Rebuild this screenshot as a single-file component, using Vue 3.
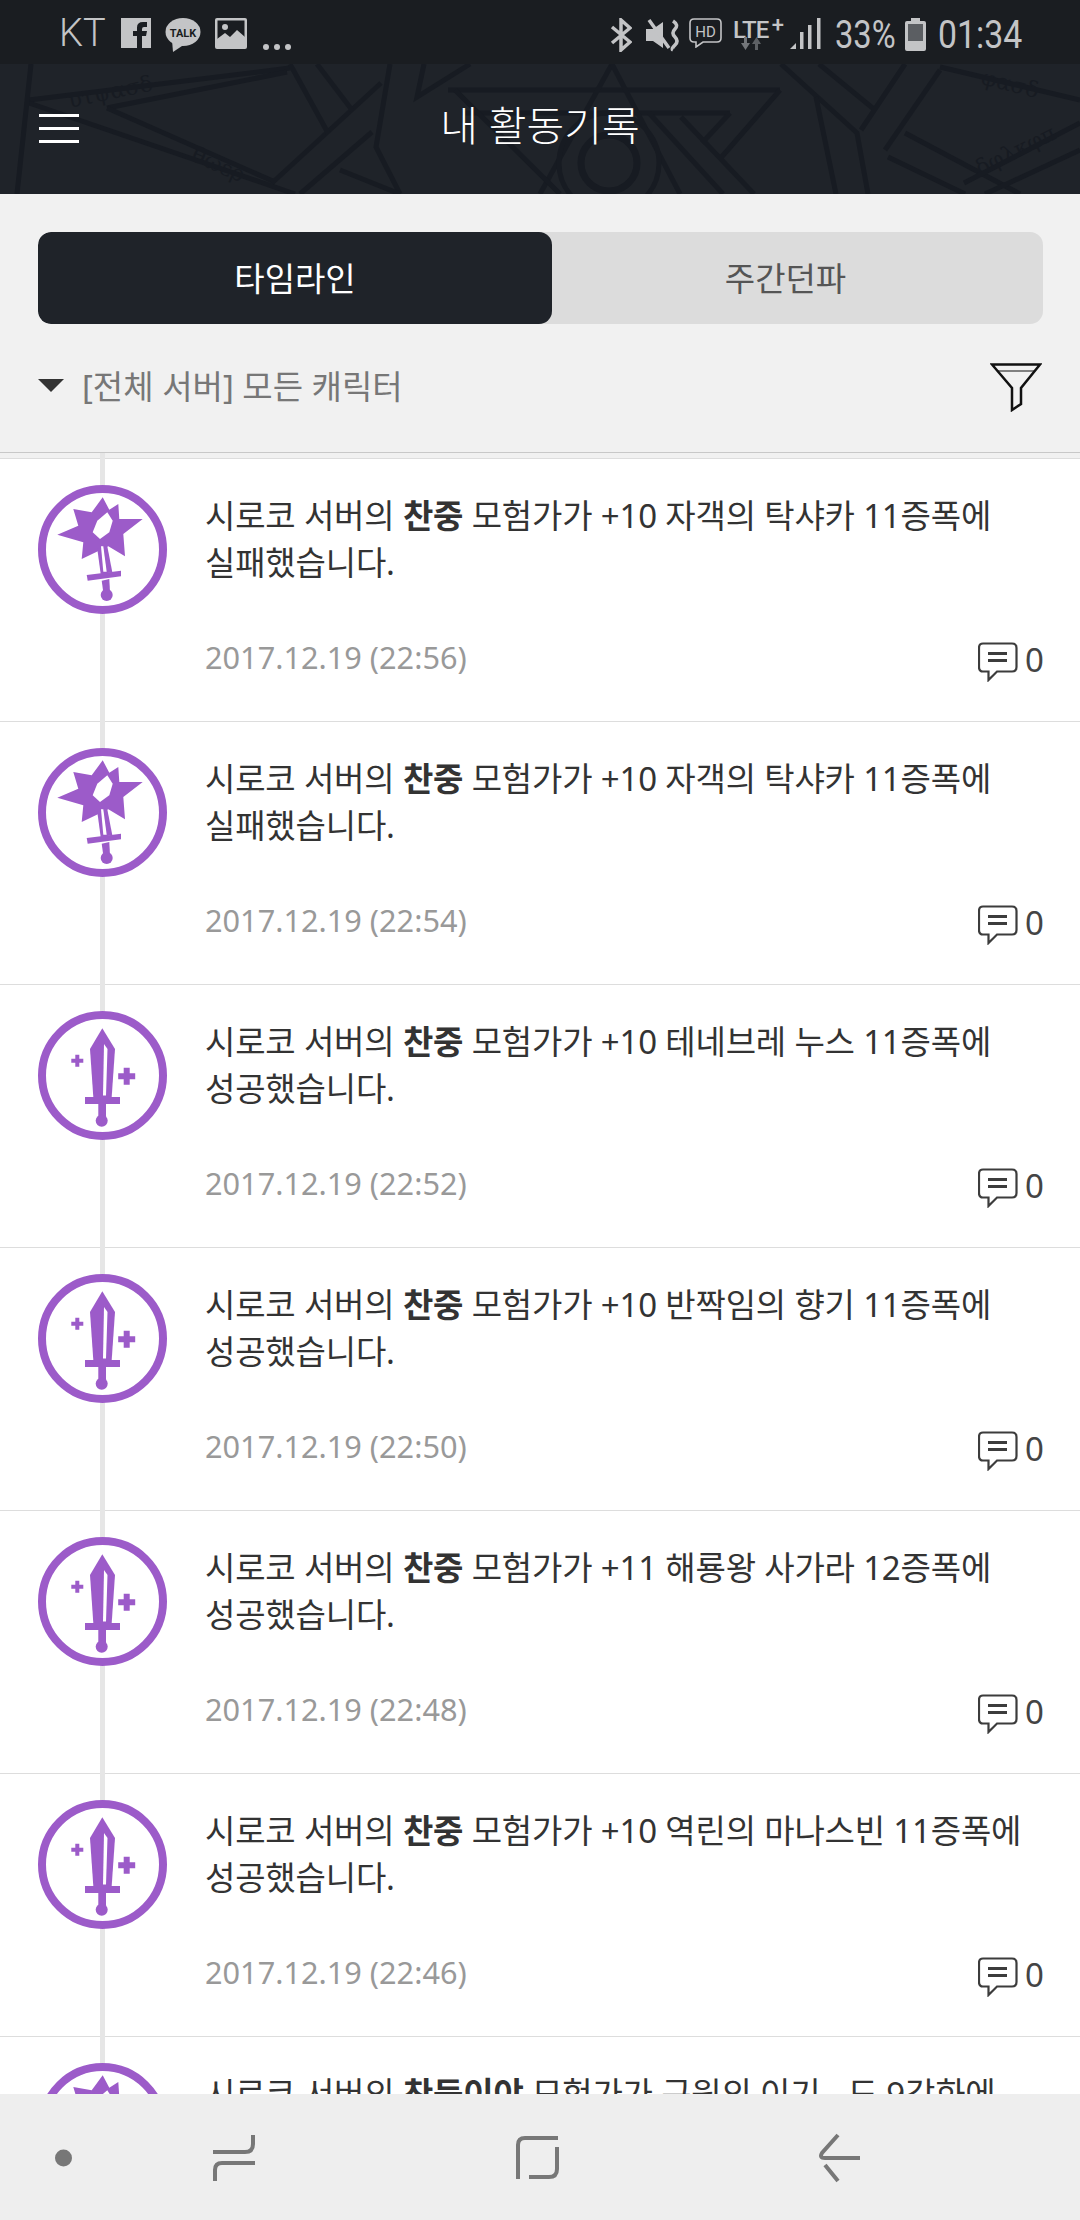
<script setup>
const rows = [
  { name: '찬중', rest: ' 모험가가 +10 자객의 탁샤카 11증폭에', result: '실패했습니다.', date: '2017.12.19 (22:56)', kind: 'star' },
  { name: '찬중', rest: ' 모험가가 +10 자객의 탁샤카 11증폭에', result: '실패했습니다.', date: '2017.12.19 (22:54)', kind: 'star' },
  { name: '찬중', rest: ' 모험가가 +10 테네브레 누스 11증폭에', result: '성공했습니다.', date: '2017.12.19 (22:52)', kind: 'sword' },
  { name: '찬중', rest: ' 모험가가 +10 반짝임의 향기 11증폭에', result: '성공했습니다.', date: '2017.12.19 (22:50)', kind: 'sword' },
  { name: '찬중', rest: ' 모험가가 +11 해룡왕 사가라 12증폭에', result: '성공했습니다.', date: '2017.12.19 (22:48)', kind: 'sword' },
  { name: '찬중', rest: ' 모험가가 +10 역린의 마나스빈 11증폭에', result: '성공했습니다.', date: '2017.12.19 (22:46)', kind: 'sword' },
  { name: '찬둥이야', rest: ' 모험가가 구원의 이기 - 도 9강화에', result: '', date: '', kind: 'star' }
]
const patternLines = [
  'M29 100L290 68', 'M107 108L287 72', 'M29 103L295 194', 'M107 108L275 182',
  'M381 83L272 183', 'M372 132L300 194', 'M290 64L328 133', 'M317 64L352 110',
  'M390 64L376 147L400 194', 'M424 64L417 97L470 64', 'M31 64L17 194',
  'M448 90H780', 'M462 113H730', 'M780 90L719 160', 'M730 113L702 143',
  'M681 117L754 194', 'M649 113L723 194', 'M612 64L540 194', 'M612 64L680 194',
  'M455 90L560 194', 'M781 64L857 133L868 194', 'M819 64L875 110', 'M905 64L861 130',
  'M940 70L885 150', 'M940 67L1080 100', 'M905 133L1020 194', 'M888 157L965 194',
  'M964 183L1080 123', 'M985 194L1080 150', 'M816 97L836 194', 'M340 170L400 194'
]
</script>

<template>
  <div class="screen">
    <div class="status">
      <div class="status-left">
        <span class="carrier">KT</span>
        <svg class="ic" width="30" height="30" viewBox="0 0 30 30"><path fill="#c3c4c6" d="M0 0h30v30H0z"/><path fill="#1a1d21" d="M16 30V18h-4v-5h4V9.500Q16 4 22 4h4v5h-3q-2 0-2 2v2h5l-1 5h-4v12z"/></svg>
        <svg class="ic talk" width="36" height="34" viewBox="0 0 36 34"><ellipse cx="18" cy="14" rx="17.500" ry="14" fill="#c3c4c6"/><path fill="#c3c4c6" d="M7 22L8 34L20 26z"/><text x="18" y="18.500" text-anchor="middle" class="talk-t">TALK</text></svg>
        <svg class="ic" width="32" height="31" viewBox="0 0 32 31"><rect width="32" height="31" rx="2" fill="#c3c4c6"/><rect x="2.500" y="2.500" width="27" height="21" fill="#1a1d21"/><circle cx="10" cy="9" r="3" fill="#c3c4c6"/><path fill="#c3c4c6" d="M2 25V21L10 15L15 19L22 12L30 19V25z"/></svg>
        <span class="dots"><i></i><i></i><i></i></span>
      </div>
      <div class="status-right">
        <svg width="22" height="34" viewBox="0 0 22 34" fill="none" stroke="#c3c4c6" stroke-width="3.500"><path d="M2 9L20 24L11 32V2L20 10L2 25"/></svg>
        <svg class="g14" width="34" height="34" viewBox="0 0 34 34"><path fill="#c3c4c6" d="M0 11h7L17 4v26L7 23H0z"/><path stroke="#c3c4c6" stroke-width="3.500" fill="none" d="M3 2L23 30M27 3Q33 7 29 11T29 19T29 27T27 32"/></svg>
        <svg class="g9" width="33" height="30" viewBox="0 0 33 30" fill="none" stroke="#c3c4c6" stroke-width="1.600"><path d="M5 1H28Q32 1 32 5V20Q32 24 28 24H14L7 29V24H5Q1 24 1 20V5Q1 1 5 1Z"/><text x="16.500" y="19" text-anchor="middle" class="hd-t">HD</text></svg>
        <span class="lte g11"><span class="lte-t">LTE</span><sup class="lte-p">+</sup><svg class="lte-arrows" width="20" height="13" viewBox="0 0 20 13"><path fill="#73767a" d="M3 0h3v6h3L4.500 13L0 6h3z"/><path fill="#5d6064" d="M14 13h3V7h3L15.500 0L11 7h3z"/></svg></span>
        <svg class="g6" width="32" height="34" viewBox="0 0 32 34" fill="#c3c4c6"><path d="M0 31L6 25V31z"/><path d="M10 14h3.500V31H10zM18 7h3.500V31H18z"/><path d="M27 0h3.500V31H27z"/></svg>
        <span class="pct g13"><span class="cond">33%</span></span>
        <svg class="batt g10" width="21" height="33" viewBox="0 0 21 33"><path fill="#c3c4c6" d="M6 0h9v3h4q2 0 2 2v26q0 2-2 2H2q-2 0-2-2V5q0-2 2-2h4z"/><rect x="3" y="6" width="15" height="17" fill="#5b5e62"/></svg>
        <span class="clock g12"><span class="cond wide">01:34</span></span>
      </div>
    </div>

    <header class="bar">
      <svg class="pattern" viewBox="0 64 1080 130" width="1080" height="130" fill="none" stroke="#171b22" stroke-width="5">
        <path v-for="d in patternLines" :key="d" :d="d"/>
        <circle cx="609" cy="163" r="50"/><circle cx="609" cy="163" r="28" stroke-width="7"/>
        <text x="70" y="108" transform="rotate(-12 70 108)" class="greek">υτψασδ</text>
        <text x="190" y="160" transform="rotate(24 190 160)" class="greek">θωερ</text>
        <text x="980" y="176" transform="rotate(-26 980 176)" class="greek">δφλκφπ</text>
        <text x="980" y="84" transform="rotate(14 980 84)" class="greek">φασδ</text>
      </svg>
      <button class="menu" aria-label="메뉴"><i></i><i></i><i></i></button>
      <h1 class="title">내 활동기록</h1>
    </header>

    <section class="controls">
      <div class="tabs">
        <div class="tab active">타임라인</div>
        <div class="tab">주간던파</div>
      </div>
      <div class="filter">
        <div class="server"><i class="caret"></i><span>[전체 서버] 모든 캐릭터</span></div>
        <svg class="funnel" width="52" height="49" viewBox="0 0 52 49" fill="none" stroke="#111" stroke-width="2.500"><path d="M2 1.500H50L31 25V41L22 47V25Z"/><path stroke-width="1.200" d="M8 8H44"/></svg>
      </div>
    </section>

    <main class="list">
      <div class="rail"></div>
      <article v-for="(r, i) in rows" :key="i" class="row">
        <svg class="badge" width="129" height="129" viewBox="0 0 129 129">
          <circle cx="64.500" cy="64.500" r="60.500" fill="#fff" stroke="#9c5bc9" stroke-width="8"/>
          <g v-if="r.kind === 'star'" fill="#9c5bc9">
            <polygon points="64.700,12.300 71.300,24.700 80.300,19 81.300,34 104.700,34 85.300,49 87,71.300 70.300,61.300 43.700,74 45.300,57.300 19.300,49.700 40.300,40.700 35.300,24 53.700,27.300"/>
            <polygon fill="#fff" points="69.300,27.300 74.700,35.700 71.300,47.300 62,54 54.700,47.300 59.300,35.700"/>
            <polygon points="59.300,64 69.300,61.300 74.300,87.300 62.700,89"/>
            <polygon fill="#fff" points="63,61.300 65.300,61.300 68.700,86.700 65.300,86.700"/>
            <polygon points="48.700,90 83,85.700 83,91.300 49.700,95.700"/>
            <polygon points="63.700,95.700 71.300,94 72,107.300 65.300,107.300"/>
            <circle cx="68.700" cy="110" r="6"/>
          </g>
          <g v-else fill="#9c5bc9">
            <polygon points="64.300,17.300 77,38 73.700,86 55.300,86 52,38"/>
            <polygon fill="#fff" points="66,33 69.500,38 68,84.500 65,84.500"/>
            <rect x="47" y="86" width="35" height="7"/>
            <rect x="60.300" y="93" width="7.700" height="16"/>
            <circle cx="63.700" cy="109.700" r="6"/>
            <path d="M37.300 43.700h4v4h4v4h-4v4h-4v-4h-4v-4h4z"/>
            <path d="M85.700 56.800h6v5.500h5.500v6h-5.500v5.500h-6v-5.500h-5.500v-6h5.500z"/>
          </g>
        </svg>
        <div class="body">
          <p class="msg">시로코 서버의 <b>{{ r.name }}</b>{{ r.rest }}<br/>{{ r.result }}</p>
          <div class="meta">
            <span class="date">{{ r.date }}</span>
            <span class="count">
              <svg class="bubble" width="40" height="40" viewBox="0 0 40 40" fill="none" stroke="#3c3c3c" stroke-width="2.200"><path d="M5 1.500H34Q38.500 1.500 38.500 6V25Q38.500 29.500 34 29.500H19L10.500 38V29.500H5Q1 29.500 1 25V6Q1 1.500 5 1.500Z"/><path stroke-width="3" d="M10 11.500H29M10 18.500H29"/></svg>
              <span>0</span>
            </span>
          </div>
        </div>
      </article>
    </main>

    <nav class="nav">
      <svg class="nav-icons" width="1080" height="126" viewBox="0 0 1080 126" fill="none" stroke="#777" stroke-width="4">
        <circle cx="63.500" cy="64" r="8.500" fill="#777" stroke="none"/>
        <path d="M253 41V50Q253 58 245 58H213M255 69H222Q215 69 215 76V87"/>
        <path d="M558 44H525Q518 44 518 51V85M557 53V75Q557 83 549 83H529"/>
        <path d="M838 41L822 59Q819 64 825 64H860M825 71L838 87"/>
      </svg>
    </nav>
  </div>
</template>

<style scoped>
.screen { width: 1080px; height: 2220px; display: flex; flex-direction: column; overflow: hidden; background: #fff; font-family: "Noto Sans", "Noto Sans CJK KR", sans-serif; }
.status { height: 64px; flex: none; background: #1a1d21; color: #c3c4c6; display: flex; justify-content: space-between; padding: 18px 60px 0 59px; box-sizing: border-box; }
.status-left, .status-right { display: flex; align-items: flex-start; }
.carrier { font: 300 38px/30px Roboto, sans-serif; margin-right: 15px; }
.ic { margin-right: 14px; flex: none; }
.talk-t { font: bold 11px Roboto, sans-serif; fill: #1a1d21; }
.dots { display: flex; gap: 5px; margin-top: 26px; margin-left: 2px; }
.dots i { width: 6px; height: 6px; border-radius: 50%; background: #c3c4c6; }
.g14 { margin-left: 14px; }
.g9 { margin-left: 9px; }
.g11 { margin-left: 11px; }
.g6 { margin-left: 6px; }
.g13 { margin-left: 13px; }
.g10 { margin-left: 10px; }
.g12 { margin-left: 12px; }
.hd-t { font: 15px Roboto, sans-serif; fill: #c3c4c6; stroke: none; }
.lte { position: relative; width: 51px; height: 34px; }
.lte-t { font: 500 24px/24px Roboto, sans-serif; position: absolute; left: 0; top: 0; letter-spacing: -1px; }
.lte-p { font: 500 22px/22px Roboto, sans-serif; position: absolute; right: 0; top: -4px; }
.lte-arrows { position: absolute; left: 8px; top: 19px; }
.pct, .clock { font: 38px/34px Roboto, sans-serif; display: inline-block; }
.pct { width: 60px; }
.clock { width: 82px; }
.cond { display: inline-block; transform: scaleX(.86); transform-origin: left center; white-space: nowrap; }
.cond.wide { transform: scaleX(.89); }

.bar { position: relative; height: 130px; flex: none; background: #1f2329; display: flex; align-items: center; justify-content: center; overflow: hidden; }
.pattern { position: absolute; left: 0; top: 0; }
.greek { font: 22px "DejaVu Serif", serif; fill: #171b22; stroke: none; }
.menu { position: absolute; left: 39px; top: 50px; width: 40px; height: 29px; padding: 0; border: 0; background: none; display: flex; flex-direction: column; justify-content: space-between; }
.menu i { display: block; height: 3px; background: #fff; }
.title { position: relative; margin: -8px 0 0; font-size: 41px; font-weight: 200; color: #fff; line-height: 60px; }

.controls { flex: none; height: 259px; box-sizing: border-box; background: #f1f1f1; padding: 38px 37px 0 38px; border-bottom: 1px solid #c8c8c8; }
.tabs { display: flex; height: 92px; border-radius: 13px; overflow: hidden; background: #dcdcdc; }
.tab { display: flex; align-items: center; justify-content: center; font-size: 33px; color: #555; padding-bottom: 3px; box-sizing: border-box; }
.tab:first-child { width: 514px; }
.tab:last-child { flex: 1; padding-right: 24px; }
.tab.active { background: #1f2329; color: #fff; border-radius: 13px; }
.filter { display: flex; align-items: center; justify-content: space-between; margin-top: 37px; padding-right: 1px; height: 50px; }
.server { display: flex; align-items: center; gap: 18px; font-size: 33px; color: #777; margin-top: -2px; }
.funnel { margin-top: 3px; }
.caret { width: 0; height: 0; border-left: 13px solid transparent; border-right: 13px solid transparent; border-top: 13px solid #333; }

.list { flex: 1; min-height: 0; position: relative; overflow: hidden; padding-top: 5px; background: #f1f1f1; }
.rail { position: absolute; left: 100px; top: 0; bottom: 0; width: 5px; background: #e6e6e6; z-index: 1; }
.row { position: relative; height: 263px; box-sizing: border-box; background: #fff; border-top: 1px solid #ddd; padding: 26px 38px 0; display: flex; align-items: flex-start; }
.badge { flex: none; position: relative; z-index: 2; }
.body { margin-left: 38px; flex: 1; min-width: 0; }
.msg { margin: 7px 0 0; font-size: 33px; letter-spacing: -.18px; line-height: 47px; color: #333; white-space: nowrap; min-height: 94px; }
.msg b { font-weight: 700; }
.meta { display: flex; justify-content: space-between; align-items: center; margin-top: 48px; }
.date { font-size: 30.700px; color: #999; }
.count { display: flex; align-items: center; gap: 7px; font-size: 33px; color: #444; margin: 3px -2px -3px 0; }
.bubble { margin: 2px 0 -2px; }

.nav { flex: none; height: 126px; background: #eee; position: relative; z-index: 3; }
.nav-icons { display: block; }
</style>

<style>
html, body { margin: 0; }
</style>
